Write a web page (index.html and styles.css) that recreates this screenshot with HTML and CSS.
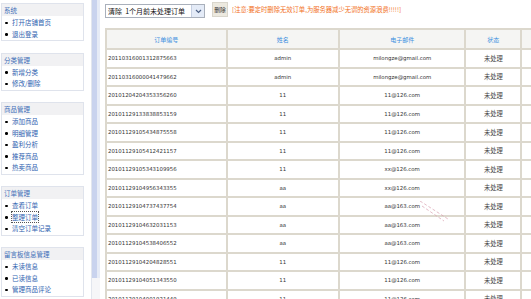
FILE: index.html
```html
<!DOCTYPE html>
<html>
<head>
<meta charset="utf-8">
<link rel="stylesheet" href="styles.css">
</head>
<body>
<div class="page">
  <div class="sidebar">
    <div class="box">
      <div class="box-head">系统</div>
      <ul class="menu"><li>打开店铺首页</li><li>退出登录</li></ul>
    </div>
    <div class="box">
      <div class="box-head">分类管理</div>
      <ul class="menu"><li>新增分类</li><li>修改/删除</li></ul>
    </div>
    <div class="box">
      <div class="box-head">商品管理</div>
      <ul class="menu"><li>添加商品</li><li>明细管理</li><li>盈利分析</li><li>推荐商品</li><li>热卖商品</li></ul>
    </div>
    <div class="box">
      <div class="box-head">订单管理</div>
      <ul class="menu"><li>查看订单</li><li><span class="focus">整理订单</span></li><li>清空订单记录</li></ul>
    </div>
    <div class="box">
      <div class="box-head">留言板信息管理</div>
      <ul class="menu"><li>未读信息</li><li>已读信息</li><li>管理商品评论</li></ul>
    </div>
  </div>
  <div class="gutter"><div class="thumb"></div></div>
  <div class="main">
    <div class="toolbar">
      <div class="select"><span class="select-text">清除&nbsp;&nbsp;1个月前未处理订单</span><span class="select-arrow"><svg width="7" height="5" viewBox="0 0 7 5"><path d="M1 1 L3.5 3.5 L6 1" fill="none" stroke="#4d6185" stroke-width="1.2"/></svg></span></div>
      <div class="btn">删除</div>
      <div class="notice">[注意:要定时删除无效订单,为服务器减少无谓的资源浪费!!!!!]</div>
    </div>
    <table class="orders">
      <thead>
        <tr><th class="c1">订单编号</th><th class="c2">姓名</th><th class="c3">电子邮件</th><th class="c4">状态</th><th class="c5"></th></tr>
      </thead>
      <tbody>
        <tr><td class="num">20110316001312875663</td><td>admin</td><td>milongze@gmail.com</td><td class="st">未处理</td><td></td></tr>
        <tr><td class="num">20110316000041479662</td><td>admin</td><td>milongze@gmail.com</td><td class="st">未处理</td><td></td></tr>
        <tr><td class="num">20101204204353356260</td><td>11</td><td>11@126.com</td><td class="st">未处理</td><td></td></tr>
        <tr><td class="num">20101129133838853159</td><td>11</td><td>11@126.com</td><td class="st">未处理</td><td></td></tr>
        <tr><td class="num">20101129105434875558</td><td>11</td><td>11@126.com</td><td class="st">未处理</td><td></td></tr>
        <tr><td class="num">20101129105412421157</td><td>11</td><td>11@126.com</td><td class="st">未处理</td><td></td></tr>
        <tr><td class="num">20101129105343109956</td><td>11</td><td>xx@126.com</td><td class="st">未处理</td><td></td></tr>
        <tr><td class="num">20101129104956343355</td><td>aa</td><td>xx@126.com</td><td class="st">未处理</td><td></td></tr>
        <tr><td class="num">20101129104737437754</td><td>aa</td><td>aa@163.com</td><td class="st">未处理</td><td></td></tr>
        <tr><td class="num">20101129104632031153</td><td>aa</td><td>aa@163.com</td><td class="st">未处理</td><td></td></tr>
        <tr><td class="num">20101129104538406552</td><td>aa</td><td>aa@163.com</td><td class="st">未处理</td><td></td></tr>
        <tr><td class="num">20101129104204828551</td><td>11</td><td>11@126.com</td><td class="st">未处理</td><td></td></tr>
        <tr><td class="num">20101129104051343550</td><td>11</td><td>11@126.com</td><td class="st">未处理</td><td></td></tr>
        <tr><td class="num">20101129104001921449</td><td>11</td><td>11@126.com</td><td class="st">未处理</td><td></td></tr>
      </tbody>
    </table>
    <svg class="scratch" width="30" height="22" viewBox="0 0 30 22"><path d="M0 0 L28 18" stroke="#d9a0b0" stroke-width="0.7" stroke-dasharray="3 2"/><path d="M2 5 L24 20" stroke="#d9a0b0" stroke-width="0.7" stroke-dasharray="3 2"/></svg>
  </div>
</div>
</body>
</html>
```
FILE: styles.css
```css
html, body {
  margin: 0;
  padding: 0;
  background: #ffffff;
  overflow: hidden;
}
body {
  width: 531px;
  height: 299px;
  font-family: "Noto Sans CJK SC", "DejaVu Sans", sans-serif;
}
.page {
  display: flex;
  height: 299px;
  overflow: hidden;
}
.sidebar {
  width: 91px;
  flex: none;
  padding-top: 3px;
  box-sizing: border-box;
  background: #ffffff;
}
.box {
  width: 83px;
  margin: 0 0 11.25px 1px;
  border: 1px solid #dfe3ec;
  box-sizing: border-box;
  background: #fff;
}
.box-head {
  height: 12px;
  line-height: 12px;
  padding-left: 2px;
  background: #f1f1f3;
  color: #3f6fb8;
  font-size: 6.5px;
}
.menu {
  list-style: none;
  margin: 0;
  padding: 1.25px 0 0 0;
}
.menu li {
  position: relative;
  height: 11.5px;
  line-height: 11.5px;
  padding-left: 10px;
  color: #2f63b0;
  font-size: 6.5px;
}
.menu li::before {
  content: "";
  position: absolute;
  left: 3px;
  top: 4.5px;
  width: 2.5px;
  height: 2.5px;
  border-radius: 50%;
  background: #000;
}
.focus {
  outline: 1px dotted #555;
}
.gutter {
  width: 9px;
  flex: none;
  background: #f6f6f8;
  position: relative;
  border-left: 1px solid #e2e6ee;
  box-sizing: border-box;
}
.thumb {
  width: 5px;
  height: 278px;
  background: #c9d3ee;
  border-right: 3px solid #e6ebf6;
}
.main {
  flex: 1;
  position: relative;
  padding-left: 5px;
  overflow: hidden;
  background: #fff;
}
.toolbar {
  height: 28px;
  display: flex;
  align-items: flex-start;
}
.select {
  margin-top: 4px;
  width: 100px;
  height: 14px;
  border: 1px solid #a9b0bb;
  box-sizing: border-box;
  display: flex;
  align-items: center;
  justify-content: space-between;
  background: #fff;
}
.select-text {
  font-size: 7px;
  color: #111;
  padding-left: 2px;
  white-space: nowrap;
}
.select-arrow {
  width: 12px;
  height: 12px;
  background: #e4ebf7;
  border-left: 1px solid #c5cfe2;
  display: flex;
  align-items: center;
  justify-content: center;
}
.btn {
  margin: 2px 0 0 7px;
  width: 16px;
  height: 15px;
  background: #ece9df;
  border: 1px solid #d9d6cc;
  box-sizing: border-box;
  font-size: 5.8px;
  color: #333;
  display: flex;
  align-items: center;
  justify-content: center;
}
.notice {
  margin: 6px 0 0 4px;
  font-size: 6.3px;
  color: #f2701c;
  white-space: nowrap;
  line-height: 8px;
}
.orders {
  border-collapse: collapse;
  table-layout: fixed;
  width: 480px;
  border: 2px solid #dcd8cd;
}
.orders th, .orders td {
  border: 2px solid #dcd8cd;
  padding: 0;
  text-align: center;
  white-space: nowrap;
  overflow: hidden;
}
.orders th {
  height: 18px;
  background: #f5f5f3;
  color: #3d8fe0;
  font-weight: normal;
  font-size: 6px;
}
.orders td {
  height: 16.5px;
  font-family: "DejaVu Sans", sans-serif;
  font-size: 5.4px;
  color: #333;
}
.orders td.num {
  text-align: left;
  padding-left: 1px;
}
.orders td.st {
  font-family: "Noto Sans CJK SC", sans-serif;
  font-size: 6.3px;
  color: #444;
}
.c1 { width: 117px; }
.c2 { width: 109px; }
.c3 { width: 123px; }
.c4 { width: 53px; }
.c5 { width: 60px; }
.scratch {
  position: absolute;
  left: 320px;
  top: 201px;
}
```
